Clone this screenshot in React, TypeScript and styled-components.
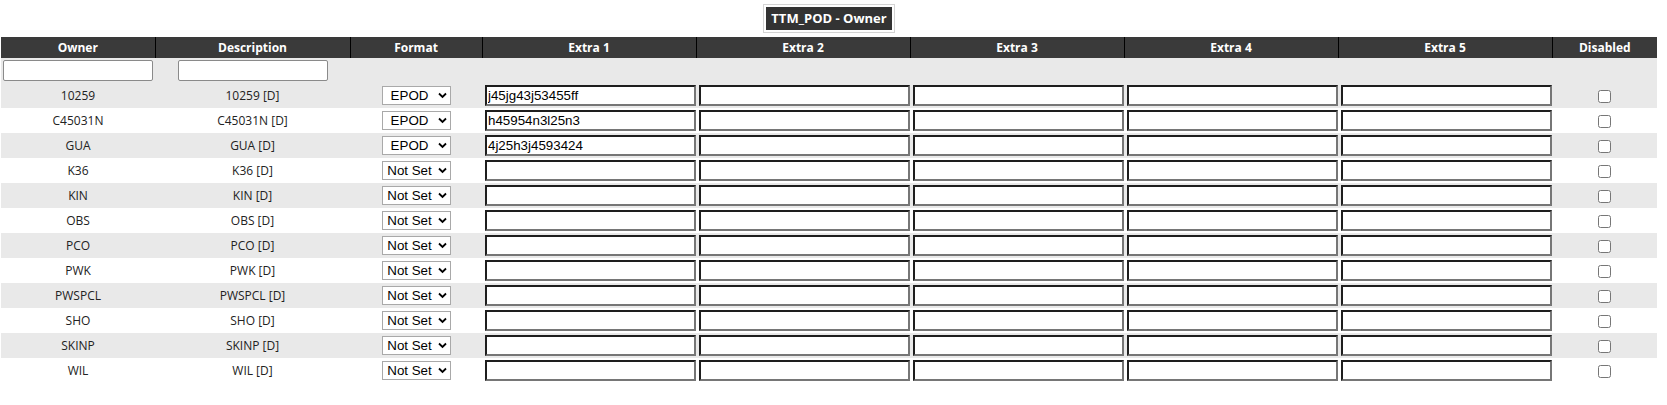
import React from "react";
import styled, { createGlobalStyle } from "styled-components";

const GlobalStyle = createGlobalStyle`
  body {
    margin: 0;
    background: #ffffff;
    font-family: "Open Sans", "Noto Sans", sans-serif;
    color: #222;
  }
`;

const Page = styled.div`
  padding: 4px 0 0 1px;
  width: 1656px;
`;

const TitleWrap = styled.div`
  display: flex;
  justify-content: center;
  margin-bottom: 4px;
`;

const TitleFrame = styled.div`
  border: 1px solid #d4d4d4;
  padding: 2px;
`;

const Title = styled.div`
  background: #333333;
  color: #ffffff;
  font-weight: 700;
  font-size: 13px;
  line-height: 23px;
  padding: 0 5px;
  white-space: nowrap;
`;

const Table = styled.table`
  border-collapse: collapse;
  table-layout: fixed;
  width: 1656px;
`;

const Col = styled.col<{ $w: number }>`
  width: ${(p) => p.$w}px;
`;

const HeadCell = styled.th`
  background: #3a3a3a;
  color: #ffffff;
  font-weight: 700;
  font-size: 12px;
  height: 21px;
  padding: 0;
  border-left: 1px solid #000;
  text-align: center;
  &:first-child {
    border-left: none;
  }
`;

const FilterRow = styled.tr`
  background: #e9e9e9;
  height: 25px;
`;

const Row = styled.tr<{ $alt: boolean }>`
  background: ${(p) => (p.$alt ? "#e9e9e9" : "#ffffff")};
  height: 25px;
`;

const Cell = styled.td`
  padding: 0;
  font-size: 12px;
  text-align: center;
  vertical-align: middle;
`;

const ExtraCell = styled.td`
  padding: 0 0 0 3px;
  text-align: left;
  vertical-align: middle;
`;

const FilterInput = styled.input`
  box-sizing: border-box;
  width: 150px;
  height: 21px;
  border: 1px solid #8a8a8a;
  border-radius: 2px;
  background: #fff;
  display: block;
  margin: 0 auto;
`;

const ExtraInput = styled.input`
  box-sizing: border-box;
  display: block;
  width: 211px;
  height: 21px;
  border-style: solid;
  border-width: 2px;
  border-color: #1e1e1e #767676 #767676 #1e1e1e;
  background: #fff;
  padding: 0 1px;
  font-family: "Liberation Sans", Arial, sans-serif;
  font-size: 13.333px;
  color: #000;
  outline: none;
`;

const SelectWrap = styled.div`
  position: relative;
  display: inline-block;
  vertical-align: middle;
`;

const Select = styled.select`
  appearance: none;
  box-sizing: border-box;
  width: 69px;
  height: 19px;
  border: 1px solid #a9a9a9;
  border-radius: 0;
  background: #fff;
  font-family: "Liberation Sans", Arial, sans-serif;
  font-size: 13.333px;
  color: #000;
  padding: 0 14px 0 1px;
  text-align: center;
  text-align-last: center;
  display: block;
`;

const Chevron = styled.svg`
  position: absolute;
  right: 4px;
  top: 6px;
  pointer-events: none;
`;

const Check = styled.input`
  width: 13px;
  height: 13px;
  margin: 0;
  vertical-align: middle;
`;

type Entry = { owner: string; format: string; extra1: string };

const entries: Entry[] = [
  { owner: "10259", format: "EPOD", extra1: "j45jg43j53455ff" },
  { owner: "C45031N", format: "EPOD", extra1: "h45954n3l25n3" },
  { owner: "GUA", format: "EPOD", extra1: "4j25h3j4593424" },
  { owner: "K36", format: "Not Set", extra1: "" },
  { owner: "KIN", format: "Not Set", extra1: "" },
  { owner: "OBS", format: "Not Set", extra1: "" },
  { owner: "PCO", format: "Not Set", extra1: "" },
  { owner: "PWK", format: "Not Set", extra1: "" },
  { owner: "PWSPCL", format: "Not Set", extra1: "" },
  { owner: "SHO", format: "Not Set", extra1: "" },
  { owner: "SKINP", format: "Not Set", extra1: "" },
  { owner: "WIL", format: "Not Set", extra1: "" },
];

const columns: [string, number][] = [
  ["Owner", 154],
  ["Description", 195],
  ["Format", 132],
  ["Extra 1", 214],
  ["Extra 2", 214],
  ["Extra 3", 214],
  ["Extra 4", 214],
  ["Extra 5", 214],
  ["Disabled", 105],
];

const FormatSelect = ({ value }: { value: string }) => (
  <SelectWrap>
    <Select defaultValue={value}>
      <option>Not Set</option>
      <option>EPOD</option>
    </Select>
    <Chevron width="9" height="7" viewBox="0 0 9 7">
      <path d="M1 1.5 L4.5 5 L8 1.5" fill="none" stroke="#000" strokeWidth="1.8" />
    </Chevron>
  </SelectWrap>
);

const App = () => {
  return (
    <Page>
      <GlobalStyle />
      <TitleWrap>
        <TitleFrame>
          <Title>TTM_POD - Owner</Title>
        </TitleFrame>
      </TitleWrap>
      <Table>
        <colgroup>
          {columns.map(([name, w]) => (
            <Col key={name} $w={w} />
          ))}
        </colgroup>
        <thead>
          <tr>
            {columns.map(([name]) => (
              <HeadCell key={name}>{name}</HeadCell>
            ))}
          </tr>
          <FilterRow>
            <Cell>
              <FilterInput />
            </Cell>
            <Cell>
              <FilterInput />
            </Cell>
            <Cell colSpan={7} />
          </FilterRow>
        </thead>
        <tbody>
          {entries.map((e, i) => (
            <Row key={e.owner} $alt={i % 2 === 0}>
              <Cell>{e.owner}</Cell>
              <Cell>{e.owner} [D]</Cell>
              <Cell>
                <FormatSelect value={e.format} />
              </Cell>
              <ExtraCell>
                <ExtraInput defaultValue={e.extra1} />
              </ExtraCell>
              {[2, 3, 4, 5].map((n) => (
                <ExtraCell key={n}>
                  <ExtraInput />
                </ExtraCell>
              ))}
              <Cell>
                <Check type="checkbox" />
              </Cell>
            </Row>
          ))}
        </tbody>
      </Table>
    </Page>
  );
};

export default App;
